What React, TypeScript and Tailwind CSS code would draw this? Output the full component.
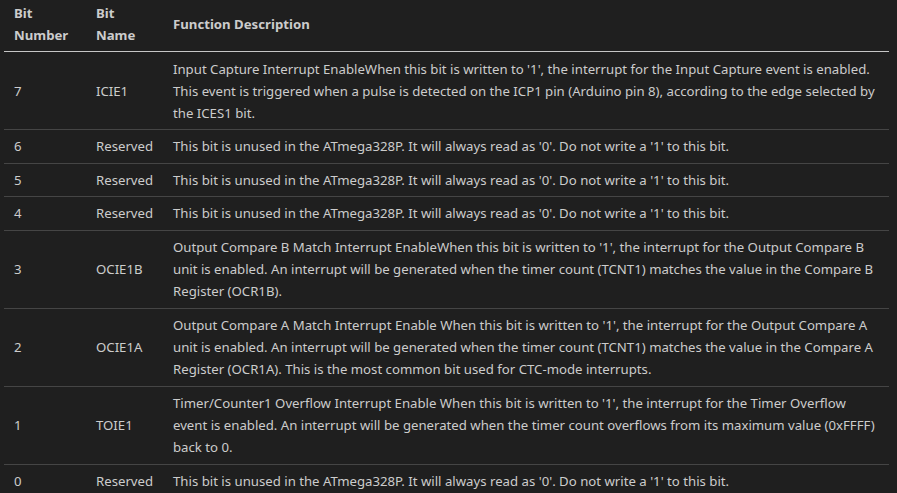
const reserved = ["This bit is unused in the ATmega328P. It will always read as '0'. Do not write a '1' to this bit."];

const rows: { bit: string; name: string; lines: string[] }[] = [
  {
    bit: "7",
    name: "ICIE1",
    lines: [
      "Input Capture Interrupt EnableWhen this bit is written to '1', the interrupt for the Input Capture event is enabled.",
      "This event is triggered when a pulse is detected on the ICP1 pin (Arduino pin 8), according to the edge selected by",
      "the ICES1 bit.",
    ],
  },
  { bit: "6", name: "Reserved", lines: reserved },
  { bit: "5", name: "Reserved", lines: reserved },
  { bit: "4", name: "Reserved", lines: reserved },
  {
    bit: "3",
    name: "OCIE1B",
    lines: [
      "Output Compare B Match Interrupt EnableWhen this bit is written to '1', the interrupt for the Output Compare B",
      "unit is enabled. An interrupt will be generated when the timer count (TCNT1) matches the value in the Compare B",
      "Register (OCR1B).",
    ],
  },
  {
    bit: "2",
    name: "OCIE1A",
    lines: [
      "Output Compare A Match Interrupt Enable When this bit is written to '1', the interrupt for the Output Compare A",
      "unit is enabled. An interrupt will be generated when the timer count (TCNT1) matches the value in the Compare A",
      "Register (OCR1A). This is the most common bit used for CTC-mode interrupts.",
    ],
  },
  {
    bit: "1",
    name: "TOIE1",
    lines: [
      "Timer/Counter1 Overflow Interrupt Enable When this bit is written to '1', the interrupt for the Timer Overflow",
      "event is enabled. An interrupt will be generated when the timer count overflows from its maximum value (0xFFFF)",
      "back to 0.",
    ],
  },
  { bit: "0", name: "Reserved", lines: reserved },
];

export default function App() {
  return (
    <div className="w-[897px] h-[493px] overflow-hidden bg-[#1f1f1f] pl-[4px] text-[#cccccc] text-[13.2px] leading-[22px] font-['Noto_Sans',sans-serif]">
      <table className="-mt-[3px] w-[885px] table-fixed border-collapse">
        <colgroup>
          <col className="w-[82px]" />
          <col className="w-[77px]" />
          <col />
        </colgroup>
        <thead>
          <tr className="border-b border-[#c6c6c6]">
            <th className="px-[10px] py-[5px] text-left align-middle font-bold">
              Bit
              <br />
              Number
            </th>
            <th className="px-[10px] py-[5px] text-left align-middle font-bold">
              Bit
              <br />
              Name
            </th>
            <th className="px-[10px] py-[5px] text-left align-middle font-bold">Function Description</th>
          </tr>
        </thead>
        <tbody>
          {rows.map((row, i) => (
            <tr key={i} className="border-b border-[#454545]">
              <td className={`px-[10px] align-middle ${row.lines.length > 1 ? "h-[78px]" : "h-[33.5px]"}`}>{row.bit}</td>
              <td className="px-[10px] align-middle">{row.name}</td>
              <td className="px-[10px] align-middle whitespace-nowrap">
                {row.lines.map((line, j) => (
                  <div key={j}>{line}</div>
                ))}
              </td>
            </tr>
          ))}
        </tbody>
      </table>
    </div>
  );
}
